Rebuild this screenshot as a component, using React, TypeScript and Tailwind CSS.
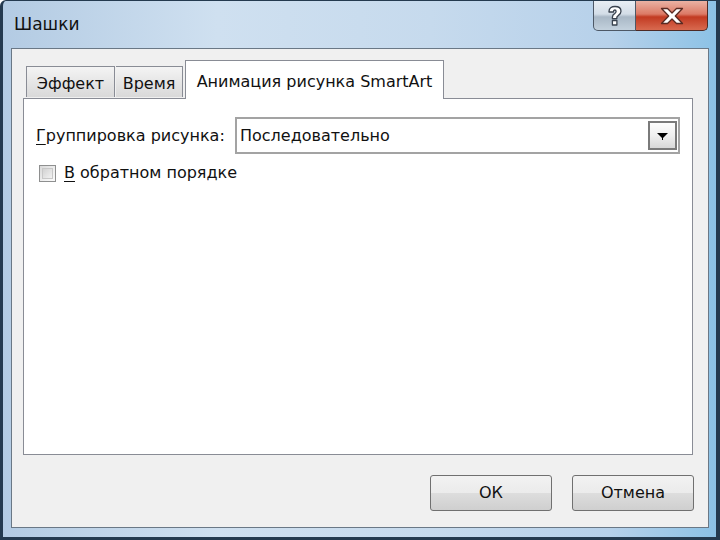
import React from "react";

export default function App() {
  const font = { fontFamily: '"DejaVu Sans", "Liberation Sans", sans-serif' };
  return (
    <div className="w-[720px] h-[540px] bg-white" style={font}>
      <div className="relative w-[720px] h-[540px] rounded-tl-[6px] border-l-[3px] border-r-[4px] border-b-[3px] border-t border-[#243a4f] bg-[linear-gradient(90deg,#b3cbe3_0%,#cfe0f0_30%,#c6daed_60%,#b7d1ea_85%,#8cc2e6_100%)] pt-[47px] pl-[8px] pr-[7px] pb-[9px] flex">
        {/* title */}
        <div className="absolute left-[11px] top-[11px] text-[17px] text-[#111]">Шашки</div>
        {/* caption buttons */}
        <div className="absolute right-[8px] top-0 flex h-[30px]">
          <div className="w-[43px] h-[30px] rounded-bl-[5px] border border-t-0 border-[#4d5866] bg-[linear-gradient(180deg,#e8eef4_0%,#d3dde7_45%,#a9b8c6_55%,#c3d1dd_100%)] flex items-center justify-center">
            <svg width="16" height="22" viewBox="0 0 16 22">
              <path d="M2 6.5C2 3 4.5 1.5 8 1.5s6 1.8 6 4.8c0 2.4-1.4 3.4-2.8 4.3-1 .6-1.4 1.1-1.4 2.2v.9H5.4v-1.4c0-1.9.9-2.9 2.2-3.7.9-.6 1.5-1 1.5-2 0-1-.5-1.6-1.3-1.6-.9 0-1.4.6-1.4 2H2z M5.4 15.5h4.5v4.5H5.4z" fill="#fff" stroke="#39424e" strokeWidth="1.3" strokeLinejoin="round" />
            </svg>
          </div>
          <div className="w-[72px] h-[30px] rounded-br-[5px] border border-t-0 border-l-0 border-[#4d2a25] bg-[linear-gradient(180deg,#eab2a4_0%,#dc7a66_45%,#c23a22_55%,#d86a50_100%)] flex items-center justify-center">
            <svg width="24" height="18" viewBox="0 0 24 18">
              <path d="M1.5 1.5h6l4.5 4.5 4.5-4.5h6l-7.2 7.5 7.2 7.5h-6L12 12l-4.5 4.5h-6L8.7 9z" fill="#fff" stroke="#5a2a22" strokeWidth="1.3" strokeLinejoin="round" />
            </svg>
          </div>
        </div>
        {/* inner client */}
        <div className="flex-1 border border-[#6a7886] bg-[#f0f0f0] flex flex-col pt-[11px] pl-[11px] pr-[15px] pb-[16px]">
          {/* tabs */}
          <div className="flex items-end h-[38px] relative z-10">
            <div className="h-[31px] w-[89px] border border-b-0 border-[#898c95] bg-[linear-gradient(180deg,#f4f4f4_0%,#e6e6e6_50%,#d9d9d9_100%)] flex items-center justify-center pt-[4px] text-[16px] text-[#111] mb-[1px] ml-[3px]">Эффект</div>
            <div className="h-[31px] w-[67px] border border-b-0 border-l-0 border-[#898c95] bg-[linear-gradient(180deg,#f4f4f4_0%,#e6e6e6_50%,#d9d9d9_100%)] flex items-center justify-center pt-[4px] text-[16px] text-[#111] mb-[1px] ml-[1px]">Время</div>
            <div className="h-[39px] w-[259px] border border-b-0 border-[#898c95] bg-white flex items-start justify-center pt-[9px] text-[16px] text-[#111] -mb-[1px] ml-[2px]">Анимация рисунка SmartArt</div>
          </div>
          {/* panel */}
          <div className="h-[357px] border border-[#898c95] bg-white px-[12px] pt-[18px]">
            <div className="flex items-center">
              <span className="text-[16px] text-[#111] w-[199px]"><span className="underline underline-offset-[3px]">Г</span>руппировка рисунка:</span>
              <div className="w-[445px] h-[37px] border-2 border-[#a3a3a3] flex items-center justify-between pl-[3px] pr-[1px]">
                <span className="text-[16px] text-[#111]">Последовательно</span>
                <div className="w-[29px] h-[29px] border-2 border-[#7a7a7a] bg-[linear-gradient(180deg,#fdfdfd_0%,#efefef_50%,#d8d8d8_100%)] flex items-center justify-center">
                  <svg width="11" height="8" viewBox="0 0 11 8"><path d="M0 1h11L5.5 6.5z" fill="#000" /><rect x="5" y="5" width="1" height="3" fill="#000" /></svg>
                </div>
              </div>
            </div>
            <div className="flex items-center mt-[7px] ml-[3px]">
              <div className="w-[17px] h-[17px] border border-[#8e8f8f] bg-[linear-gradient(135deg,#d8d8d8_0%,#f0f0f0_60%,#fbfbfb_100%)] p-[2px]">
                <div className="w-full h-full border border-[#c8c8c8] bg-[linear-gradient(135deg,#d2d2d2,#f2f2f2)]" />
              </div>
              <span className="ml-[8px] text-[16px] text-[#111]"><span className="underline underline-offset-[3px]">В</span> обратном порядке</span>
            </div>
          </div>
          {/* buttons */}
          <div className="flex justify-end gap-[20px] mt-auto mr-[-1px]">
            <button className="w-[122px] h-[36px] rounded-[3px] border border-[#707070] bg-[linear-gradient(180deg,#f2f2f2_0%,#ebebeb_50%,#dddddd_51%,#cfcfcf_100%)] text-[16px] text-[#111]">ОК</button>
            <button className="w-[122px] h-[36px] rounded-[3px] border border-[#707070] bg-[linear-gradient(180deg,#f2f2f2_0%,#ebebeb_50%,#dddddd_51%,#cfcfcf_100%)] text-[16px] text-[#111]">Отмена</button>
          </div>
        </div>
      </div>
    </div>
  );
}
